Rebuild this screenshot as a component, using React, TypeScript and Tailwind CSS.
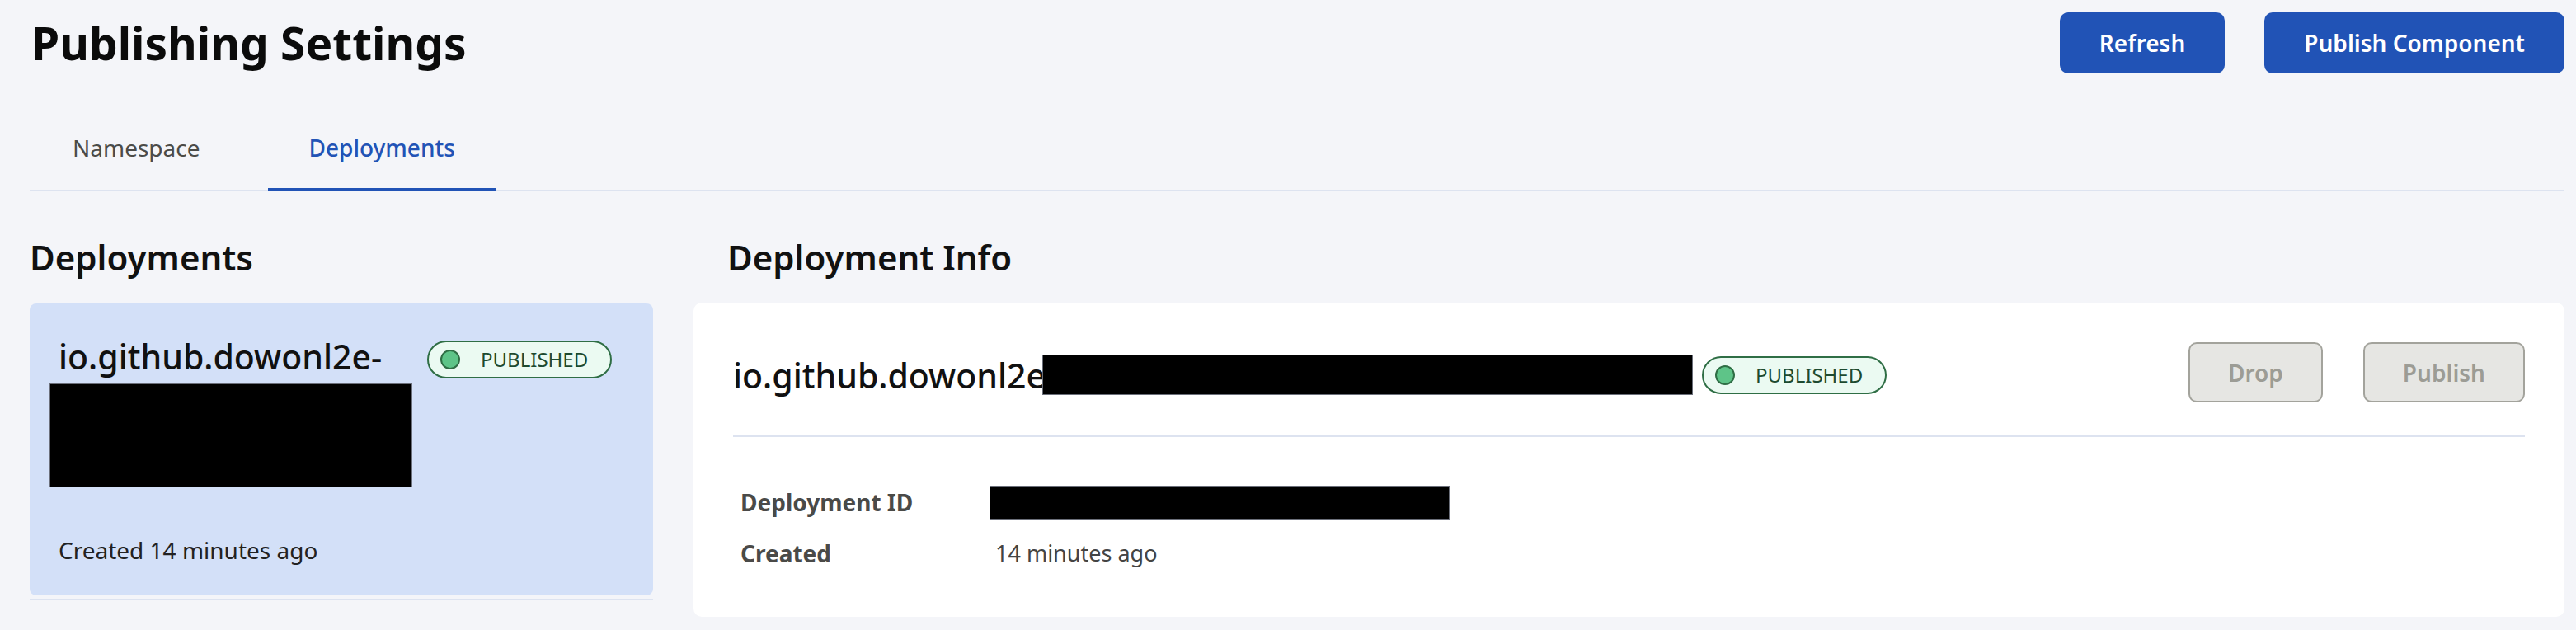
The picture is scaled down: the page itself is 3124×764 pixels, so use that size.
import React from 'react'

// Publishing settings page: header actions, tab strip, deployments list + detail card.
const font = { fontFamily: '"Noto Sans", "Open Sans", sans-serif' }

const StatusBadge = ({ label }: { label: string }) => (
  <span className="inline-flex h-[46px] shrink-0 items-center gap-[25px] rounded-full border-2 border-[#2f6e45] bg-[#ebfaf2] pl-[14px] pr-[27px]">
    <span className="h-[24px] w-[24px] rounded-full border-2 border-[#2f6e45] bg-[#5ec488]" />
    <span className="text-[24px] leading-[30px] text-[#1d4a2f]">{label}</span>
  </span>
)

const PrimaryButton = ({ children }: { children: React.ReactNode }) => (
  <button className="h-[74px] rounded-[10px] bg-[#2153b6] px-[48px] text-[28px] font-semibold leading-[40px] text-white">
    {children}
  </button>
)

const DisabledButton = ({ children }: { children: React.ReactNode }) => (
  <button
    disabled
    className="h-[73px] rounded-[10px] border-2 border-[#a3a39c] bg-[#e6e6e3] px-[46px] text-[28px] font-semibold leading-[40px] text-[#9c9c95]"
  >
    {children}
  </button>
)

const Redacted = ({ className }: { className: string }) => (
  <div className={`shrink-0 border border-[#6b6f7a] bg-black ${className}`} />
)

export default function App() {
  const tabs = [
    { label: 'Namespace', active: false },
    { label: 'Deployments', active: true },
  ]

  return (
    <div className="min-h-[764px] w-full bg-[#f4f5f9] pl-[36px] pr-[14px] pt-[15px]" style={font}>
      {/* header */}
      <div className="flex h-[74px] items-center justify-between">
        <h1 className="pl-[2px] text-[55px] font-bold leading-[74px] text-[#0b0b0b]">Publishing Settings</h1>
        <div className="flex items-center gap-[48px]">
          <PrimaryButton>Refresh</PrimaryButton>
          <PrimaryButton>Publish Component</PrimaryButton>
        </div>
      </div>

      {/* tabs */}
      <div className="mt-[41px] flex gap-[32px] border-b-2 border-[#dde3f0] pl-[2px] pr-[2px]">
        {tabs.map((tab) => (
          <button
            key={tab.label}
            className={`-mb-[2px] border-b-4 px-[50px] py-[29px] text-[28px] leading-[40px] ${
              tab.active ? 'border-[#2153b6] font-medium text-[#2153b6]' : 'border-transparent text-[#4b4b48]'
            }`}
          >
            {tab.label}
          </button>
        ))}
      </div>

      {/* body */}
      <div className="mt-[54px] flex gap-[49px]">
        {/* list */}
        <div className="w-[756px] shrink-0">
          <h2 className="text-[42px] font-semibold leading-[52px] text-[#111]">Deployments</h2>
          <div className="mt-[30px] rounded-[8px] bg-[#d3e0f8] px-[35px] pb-[37px] pt-[40px]">
            <div className="flex items-start gap-[18px]">
              <div className="w-[429px]">
                <div className="text-[41px] font-medium leading-[48px] text-[#111]">io.github.dowonl2e-</div>
                <Redacted className="-ml-[11px] mt-[9px] h-[126px] w-[440px]" />
              </div>
              <div className="mt-[5px]">
                <StatusBadge label="PUBLISHED" />
              </div>
            </div>
            <div className="mt-[58px] text-[28px] leading-[36px] text-[#222]">Created 14 minutes ago</div>
          </div>
          <div className="mt-[4px] h-[2px] bg-[#dde3f0]" />
        </div>

        {/* detail */}
        <div className="min-w-0 flex-1">
          <h2 className="pl-[41px] text-[42px] font-semibold leading-[52px] text-[#111]">Deployment Info</h2>
          <div className="mt-[29px] rounded-[10px] bg-white px-[48px] pb-[46px] pt-[48px]">
            <div className="flex items-center justify-between">
              <div className="mt-[6px] flex items-center">
                <span className="text-[41px] font-medium leading-[48px] text-[#111]">io.github.dowonl2e</span>
                <Redacted className="-ml-[4px] h-[49px] w-[789px]" />
                <span className="ml-[11px]">
                  <StatusBadge label="PUBLISHED" />
                </span>
              </div>
              <div className="flex items-center gap-[49px]">
                <DisabledButton>Drop</DisabledButton>
                <DisabledButton>Publish</DisabledButton>
              </div>
            </div>

            <div className="mt-[40px] h-[2px] bg-[#dde3f0]" />

            <div className="mt-[48px] grid grid-cols-[309px_1fr] pl-[9px] text-[27px] leading-[62px] text-[#444]">
              <div className="text-[28px] font-bold text-[#4a4a48]">Deployment ID</div>
              <div className="flex h-[62px] items-center">
                <Redacted className="-ml-[7px] h-[41px] w-[558px]" />
              </div>
              <div className="text-[28px] font-bold text-[#4a4a48]">Created</div>
              <div>14 minutes ago</div>
            </div>
          </div>
        </div>
      </div>
    </div>
  )
}
